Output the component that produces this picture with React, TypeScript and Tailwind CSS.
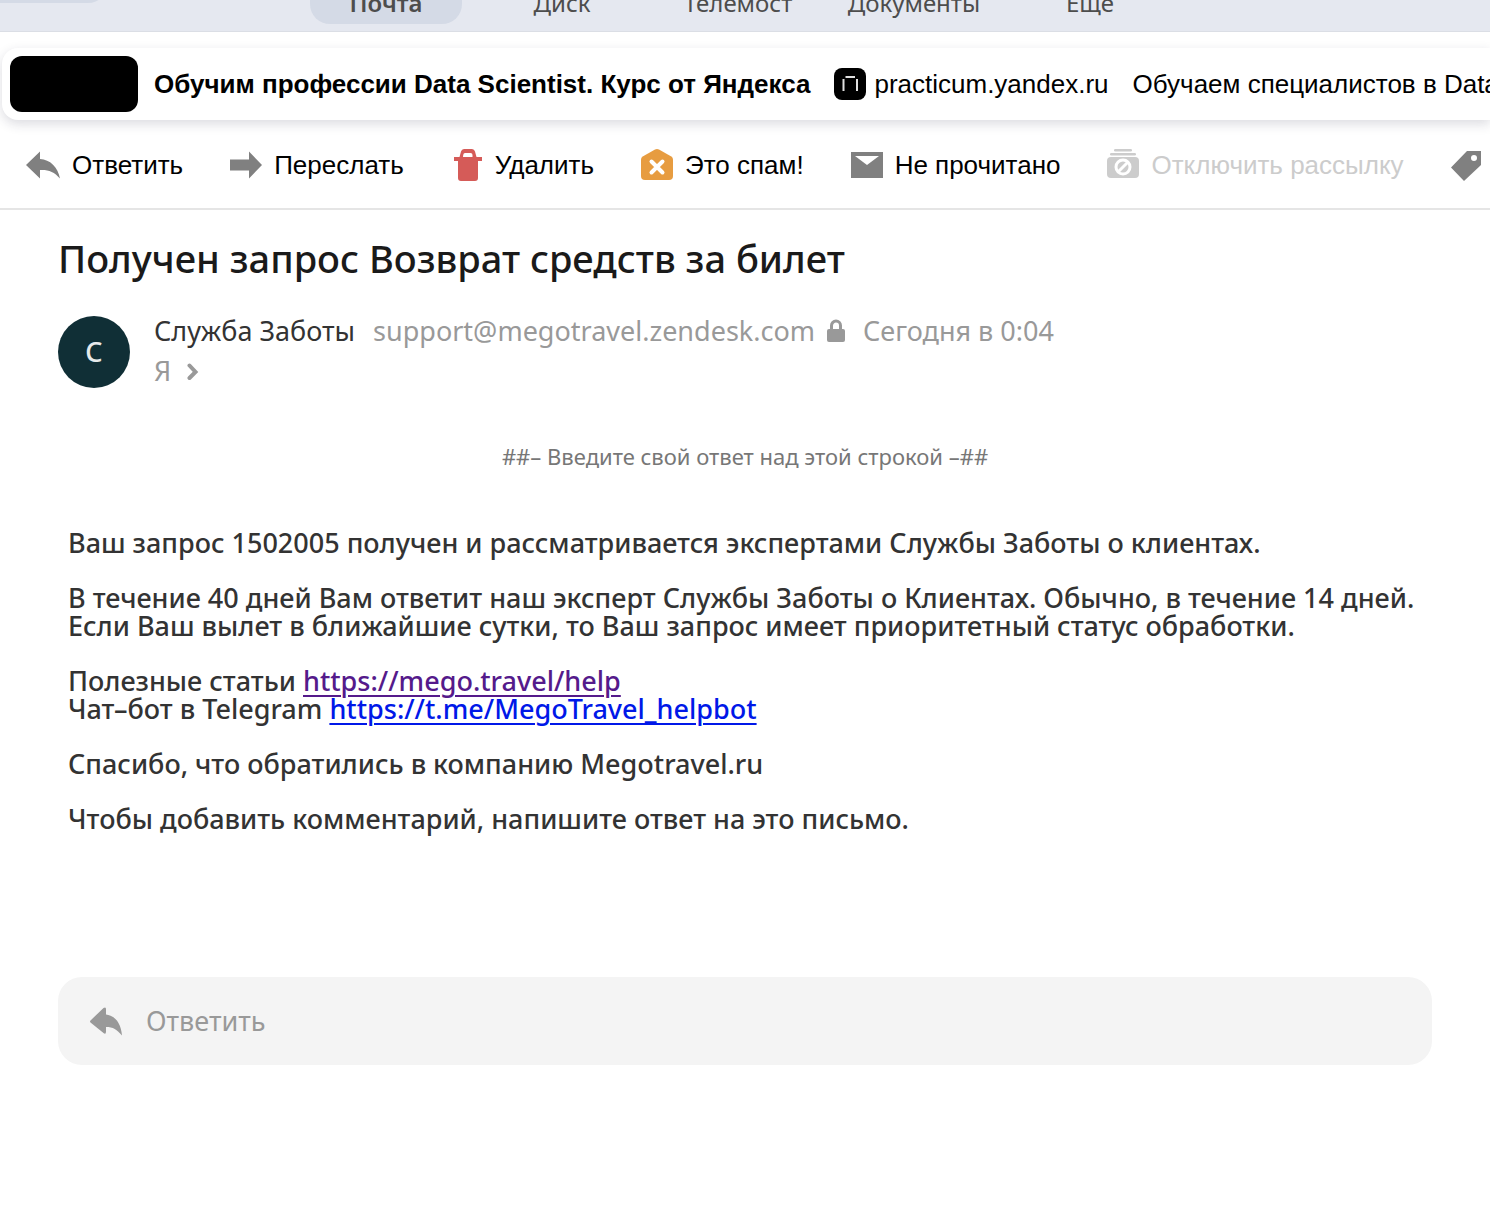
import type { ReactNode } from "react";
import clsx from "clsx";

const TABS = ["Почта", "Диск", "Телемост", "Документы", "Ещё"];

interface ToolButtonProps {
  icon: ReactNode;
  label: string;
  disabled?: boolean;
}

function ReplyIcon() {
  return (
    <svg className="h-8 w-[34px] shrink-0" viewBox="0 0 34 32" fill="#808080" aria-hidden="true">
      <path d="M0 16 14 2.500V10C24 10.500 32 18 34 29.500C28 22.500 22 20.500 14 21V29.500Z" />
    </svg>
  );
}

function ForwardIcon() {
  return (
    <svg className="h-8 w-8 shrink-0" viewBox="0 0 32 32" fill="#808080" aria-hidden="true">
      <path d="M0 10.500H19V2.500L32 16L19 29.500V21.500H0Z" />
    </svg>
  );
}

function TrashIcon() {
  return (
    <svg className="h-8 w-8 shrink-0" viewBox="-3 0 32 32" fill="#d55b58" aria-hidden="true">
      <path
        fillRule="evenodd"
        d="M0 8H5.500L7 2.500Q7.700 0 10 0H18Q20.300 0 21 2.500L22.500 8H28V12H24V29Q24 32 21 32H7Q4 32 4 29V12H0ZM9 8H18.500V6Q18.500 4 16.500 4H11Q9.500 4 9.200 6Z"
      />
    </svg>
  );
}

function SpamIcon() {
  return (
    <svg className="h-8 w-8 shrink-0" viewBox="0 0 32 32" aria-hidden="true">
      <path d="M14 .6Q16-.4 18 .6L30.300 7.400Q32 8.400 32 10.500V27Q32 31 28 31H4Q0 31 0 27V10.500Q0 8.400 1.700 7.400Z" fill="#e79c40" />
      <path d="M10.500 12.500 21.500 23.500M21.500 12.500 10.500 23.500" stroke="#fff" strokeWidth="4" strokeLinecap="round" />
    </svg>
  );
}

function UnreadIcon() {
  return (
    <svg className="h-8 w-8 shrink-0" viewBox="0 0 32 32" aria-hidden="true">
      <path d="M0 3H32V29H0Z" fill="#808080" />
      <path d="M4 7H28L16 16Z" fill="#fff" />
    </svg>
  );
}

function UnsubscribeIcon() {
  return (
    <svg className="h-8 w-8 shrink-0" viewBox="0 0 32 32" aria-hidden="true">
      <rect x="7" y="0" width="18" height="2.500" rx="1.200" fill="#ccc" />
      <rect x="3" y="4" width="26" height="2.500" rx="1.200" fill="#ccc" />
      <rect x="0" y="8" width="32" height="21" rx="4" fill="#ccc" />
      <circle cx="16" cy="18" r="7" fill="none" stroke="#fff" strokeWidth="3" />
      <path d="M11.500 22.500 20.500 13.500" stroke="#fff" strokeWidth="3" />
    </svg>
  );
}

function TagIcon() {
  return (
    <svg className="h-8 w-[30px] shrink-0" viewBox="0 0 30 32" fill="#808080" aria-hidden="true">
      <path fillRule="evenodd" d="M16 2H30V16L13 32L0 18.500ZM23 6A3 3 0 1 0 23 12A3 3 0 1 0 23 6Z" />
    </svg>
  );
}

function ToolButton({ icon, label, disabled }: ToolButtonProps) {
  return (
    <button
      type="button"
      disabled={disabled}
      className={clsx("flex shrink-0 items-center gap-3 whitespace-nowrap", disabled ? "text-[#ccc]" : "text-black")}
    >
      {icon}
      <span>{label}</span>
    </button>
  );
}

function Header() {
  return (
    <header className="flex h-8 items-end overflow-hidden border-b border-[#dbdee5] bg-[#e5e8f0]">
      <div className="mb-7 h-12 w-[108px] shrink-0 rounded-br-[20px] bg-[#d4dae6]" />
      <nav className="mb-[7px] ml-[202px] flex gap-6 font-['Noto_Sans',sans-serif] text-[24px] leading-8 text-[#4d4d4d]">
        {TABS.map((tab, index) => (
          <a
            key={tab}
            href="#"
            className={clsx(
              "flex h-12 w-[152px] items-end justify-center rounded-[20px] pb-[5px]",
              index === 0 && "bg-[#d4dae6] font-semibold"
            )}
          >
            {tab}
          </a>
        ))}
      </nav>
    </header>
  );
}

function AdBanner() {
  return (
    <a
      href="#"
      className="mt-4 ml-0.5 flex h-[72px] items-center overflow-hidden rounded-l-2xl bg-white pl-2 text-[26px] leading-8 whitespace-nowrap text-black shadow-[0_4px_12px_rgba(30,30,60,0.16)]"
    >
      <span className="h-14 w-32 shrink-0 rounded-xl bg-black" />
      <span className="ml-4 font-bold">Обучим профессии Data Scientist. Курс от Яндекса</span>
      <svg className="ml-6 h-8 w-8 shrink-0" viewBox="0 0 32 32" aria-hidden="true">
        <rect width="32" height="32" rx="8" fill="#000" />
        <path d="M11.500 9H21M9.500 11V23M23 11V23" stroke="#e0e0e0" strokeWidth="2" />
      </svg>
      <span className="ml-2">practicum.yandex.ru</span>
      <span className="ml-6">Обучаем специалистов в Data Science</span>
    </a>
  );
}

function Toolbar() {
  return (
    <div className="flex h-[90px] items-center gap-[47px] overflow-hidden border-b-2 border-[#e5e5e5] pt-0.5 pl-[26px] text-[26px] leading-8">
      <ToolButton icon={<ReplyIcon />} label="Ответить" />
      <ToolButton icon={<ForwardIcon />} label="Переслать" />
      <ToolButton icon={<TrashIcon />} label="Удалить" />
      <ToolButton icon={<SpamIcon />} label="Это спам!" />
      <ToolButton icon={<UnreadIcon />} label="Не прочитано" />
      <ToolButton icon={<UnsubscribeIcon />} label="Отключить рассылку" disabled />
      <button type="button" aria-label="Метка" className="shrink-0">
        <TagIcon />
      </button>
    </div>
  );
}

function MessageHead() {
  return (
    <div className="mt-7 flex gap-6 font-['Noto_Sans',sans-serif] text-[27px] leading-10 text-[#999]">
      <div className="mt-[5px] flex size-[72px] shrink-0 items-center justify-center rounded-full bg-[#102f36] font-medium text-[#e6eaeb]">
        С
      </div>
      <div>
        <div className="flex items-center whitespace-nowrap">
          <span className="text-[#333]">Служба Заботы</span>
          <span className="ml-[18px]">support@megotravel.zendesk.com</span>
          <svg className="ml-3 h-6 w-[18px] shrink-0" viewBox="0 0 18 24" aria-hidden="true">
            <path d="M4.500 11V6.500A4.500 4.500 0 0 1 13.500 6.500V11" fill="none" stroke="#999" strokeWidth="3" />
            <rect y="10" width="18" height="13" rx="2" fill="#999" />
          </svg>
          <span className="ml-[18px]">Сегодня в 0:04</span>
        </div>
        <button type="button" className="flex items-center gap-4">
          Я
          <svg className="h-5 w-3" viewBox="0 0 12 20" fill="none" aria-hidden="true">
            <path d="M2.500 4.500 8.500 11 2.500 17" stroke="#999" strokeWidth="4" strokeLinecap="round" />
          </svg>
        </button>
      </div>
    </div>
  );
}

function MessageBody() {
  return (
    <div className="px-[10px] font-['Noto_Sans',sans-serif] text-[#333]">
      <p className="mt-[49px] text-center text-[22px] leading-8 text-[#777]">
        ##– Введите свой ответ над этой строкой –##
      </p>
      <div className="mt-[57px] space-y-[27px] text-[27px] leading-7 font-medium">
        <p>Ваш запрос 1502005 получен и рассматривается экспертами Службы Заботы о клиентах.</p>
        <p>
          В течение 40 дней Вам ответит наш эксперт Службы Заботы о Клиентах. Обычно, в течение 14 дней.
          <br />
          Если Ваш вылет в ближайшие сутки, то Ваш запрос имеет приоритетный статус обработки.
        </p>
        <p>
          Полезные статьи{" "}
          <a href="#" className="text-[#551a8b] underline decoration-2 underline-offset-4">
            https://mego.travel/help
          </a>
          <br />
          Чат–бот в Telegram{" "}
          <a href="#" className="text-[#0018e8] underline decoration-2 underline-offset-4">
            https://t.me/MegoTravel_helpbot
          </a>
        </p>
        <p>Спасибо, что обратились в компанию Megotravel.ru</p>
        <p>Чтобы добавить комментарий, напишите ответ на это письмо.</p>
      </div>
    </div>
  );
}

export default function App() {
  return (
    <div className="min-h-screen overflow-hidden bg-white font-['Liberation_Sans',Arial,sans-serif]">
      <Header />
      <AdBanner />
      <Toolbar />
      <main className="px-[58px] pt-[23px] pb-[153px]">
        <h1 className="font-['Noto_Sans',sans-serif] text-[38px] leading-[50px] font-medium text-[#1a1a1a]">
          Получен запрос Возврат средств за билет
        </h1>
        <MessageHead />
        <MessageBody />
        <button
          type="button"
          className="mt-36 flex h-[88px] w-full items-center gap-6 rounded-3xl bg-[#f4f4f4] px-8 text-left font-['Noto_Sans',sans-serif] text-[27px] leading-8 text-[#999]"
        >
          <svg className="h-8 w-8" viewBox="0 0 32 32" fill="#999" aria-hidden="true">
            <path d="M.5 15.500 13.500 3Q16 1.500 16 4V9.500C25 10.500 31 18 32 30.500C27 24.500 23 22 16 22V26.500Q16 30 13.500 28L.5 17.500Q-.5 16.500 .5 15.500Z" />
          </svg>
          Ответить
        </button>
      </main>
    </div>
  );
}
